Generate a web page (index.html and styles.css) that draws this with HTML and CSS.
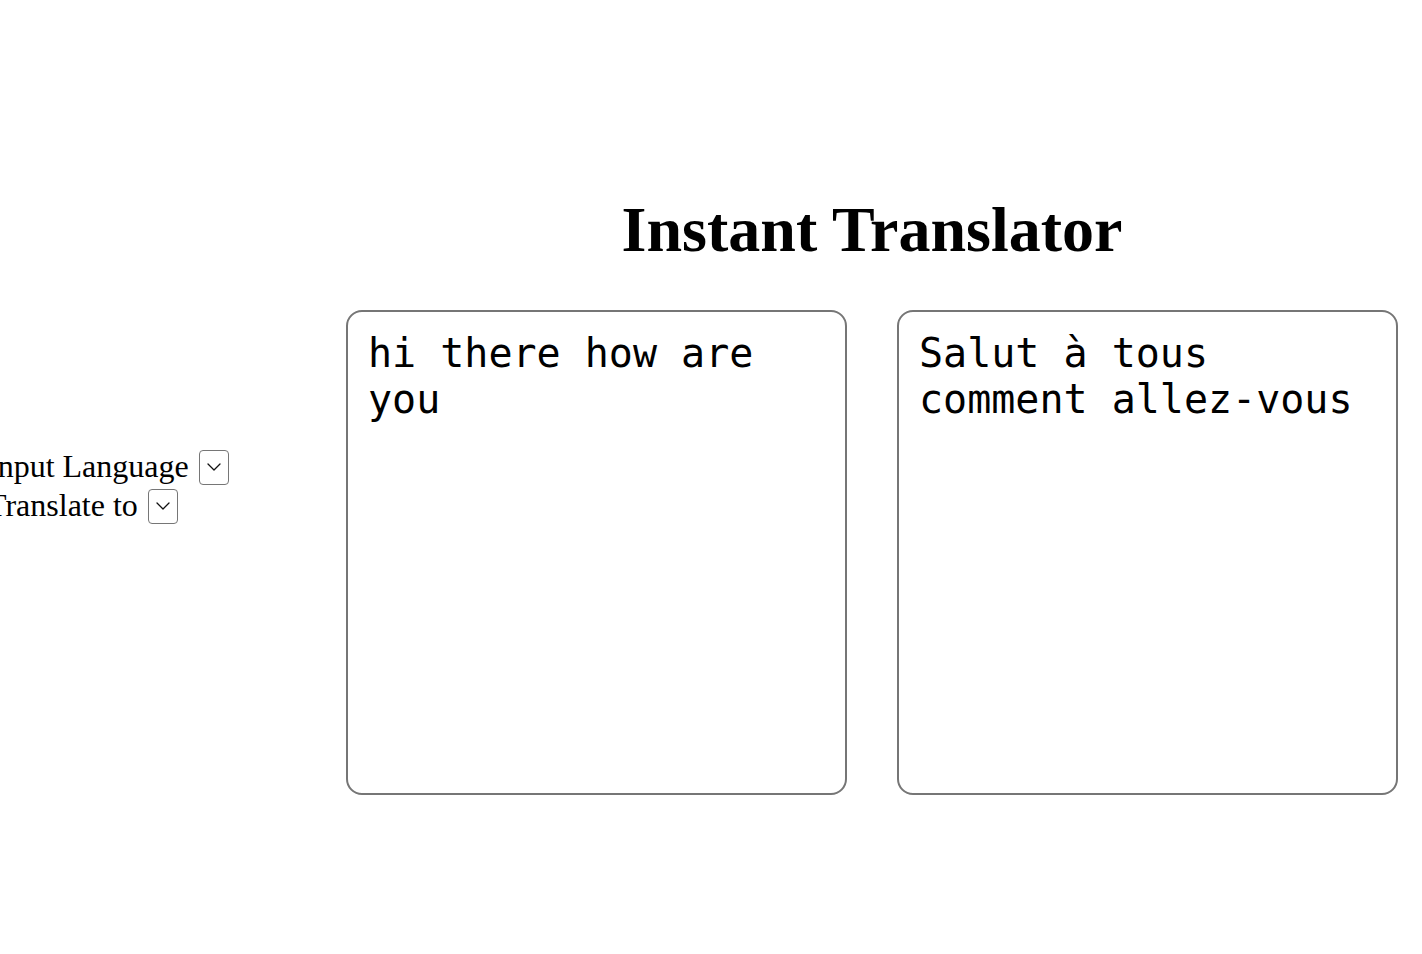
FILE: index.html
```html
<!DOCTYPE html>
<html lang="en">
<head>
<meta charset="utf-8">
<title>Instant Translator</title>
<link rel="stylesheet" href="styles.css">
</head>
<body>
<main class="page">
  <div class="controls">
    <label class="control-row">
      <span class="control-label">Input Language</span>
      <span class="select-wrap">
        <select class="lang-select" aria-label="Input Language"></select>
        <svg class="chevron" width="14" height="8" viewBox="0 0 14 8" aria-hidden="true"><path d="M1 1 L7 7 L13 1" fill="none" stroke="#111" stroke-width="1.3" stroke-linecap="round" stroke-linejoin="round"/></svg>
      </span>
    </label>
    <label class="control-row">
      <span class="control-label">Translate to</span>
      <span class="select-wrap">
        <select class="lang-select" aria-label="Translate to"></select>
        <svg class="chevron" width="14" height="8" viewBox="0 0 14 8" aria-hidden="true"><path d="M1 1 L7 7 L13 1" fill="none" stroke="#111" stroke-width="1.3" stroke-linecap="round" stroke-linejoin="round"/></svg>
      </span>
    </label>
  </div>
  <section class="panel">
    <h1 class="title">Instant Translator</h1>
    <div class="boxes">
      <textarea class="text-box">hi there how are you</textarea>
      <textarea class="text-box" readonly>Salut à tous comment allez-vous</textarea>
    </div>
  </section>
</main>
</body>
</html>
```

FILE: styles.css
```css
html, body {
  margin: 0;
  padding: 0;
  background: #fff;
  color: #000;
}

body {
  font-family: "Liberation Serif", "Times New Roman", serif;
  overflow: hidden;
}

.page {
  display: flex;
  align-items: flex-start;
  padding-top: 193px;
}

.controls {
  flex: 0 0 359px;
  margin-left: -13px;
  margin-top: 254px;
  display: flex;
  flex-direction: column;
}

.control-row {
  display: flex;
  align-items: flex-start;
  height: 39px;
  font-size: 32px;
  line-height: 39px;
  white-space: nowrap;
}

.control-label {
  margin-right: 10px;
}

.select-wrap {
  position: relative;
  display: block;
  width: 30px;
  height: 35px;
  margin-top: 3px;
}

.lang-select {
  appearance: none;
  -webkit-appearance: none;
  display: block;
  box-sizing: border-box;
  width: 30px;
  height: 35px;
  margin: 0;
  padding: 0;
  border: 1px solid #767676;
  border-radius: 4px;
  background: #fff;
}

.chevron {
  position: absolute;
  left: 8px;
  top: 13px;
  pointer-events: none;
}

.panel {
  flex: 0 0 1051px;
  display: flex;
  flex-direction: column;
}

.title {
  margin: 0 0 43px;
  font-size: 64px;
  line-height: 74px;
  font-weight: bold;
  text-align: center;
}

.boxes {
  display: flex;
  gap: 50px;
}

.text-box {
  box-sizing: border-box;
  width: 501px;
  height: 485px;
  margin: 0;
  padding: 18px 20px 20px;
  border: 2px solid #767676;
  border-radius: 16px;
  resize: none;
  font-family: "DejaVu Sans Mono", monospace;
  font-size: 40px;
  line-height: normal;
  color: #000;
  background: #fff;
  outline: none;
  overflow: hidden;
}
```
